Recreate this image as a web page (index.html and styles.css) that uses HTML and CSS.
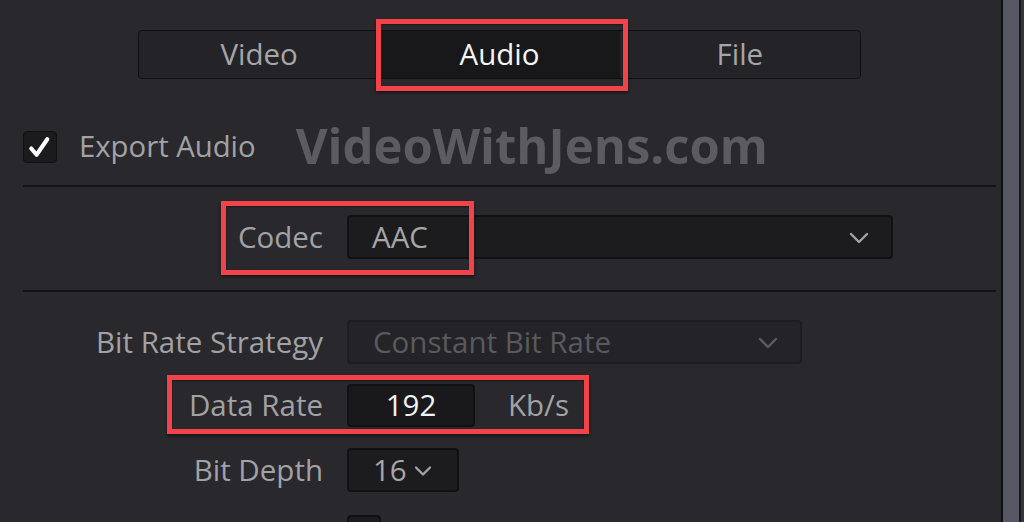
FILE: index.html
```html
<!DOCTYPE html>
<html>
<head>
<meta charset="utf-8">
<link rel="stylesheet" href="styles.css">
</head>
<body>
<div class="app">
  <div class="panel">
    <div class="tabs">
      <div class="tab">Video</div>
      <div class="tab active">Audio<span class="mark mark-audio"></span></div>
      <div class="tab">File</div>
    </div>

    <div class="export-row">
      <div class="checkbox">
        <svg width="34" height="32" viewBox="0 0 34 32"><path d="M8.5 17.5 L14 24 L25 8" fill="none" stroke="#fff" stroke-width="4.2" stroke-linecap="round" stroke-linejoin="round"/></svg>
      </div>
      <span class="export-label">Export Audio</span>
      <span class="watermark">VideoWithJens.com</span>
    </div>

    <div class="divider div-1"></div>

    <div class="row row-codec">
      <div class="label">Codec</div>
      <div class="select select-codec">
        <span>AAC</span>
        <svg class="chev" width="20" height="12" viewBox="0 0 20 12"><path d="M2 2 L10 10 L18 2" fill="none" stroke="#a2a2a2" stroke-width="2.4" stroke-linecap="round" stroke-linejoin="round"/></svg>
      </div>
      <span class="mark mark-codec"></span>
    </div>

    <div class="divider div-2"></div>

    <div class="row row-strategy">
      <div class="label">Bit Rate Strategy</div>
      <div class="select select-strategy disabled">
        <span>Constant Bit Rate</span>
        <svg class="chev" width="20" height="12" viewBox="0 0 20 12"><path d="M2 2 L10 10 L18 2" fill="none" stroke="#5e5e62" stroke-width="2.4" stroke-linecap="round" stroke-linejoin="round"/></svg>
      </div>
    </div>

    <div class="row row-rate">
      <div class="label">Data Rate</div>
      <div class="input">192</div>
      <span class="unit">Kb/s</span>
      <span class="mark mark-rate"></span>
    </div>

    <div class="row row-depth">
      <div class="label">Bit Depth</div>
      <div class="select select-depth">
        <span>16</span>
        <svg class="chev-small" width="20" height="12" viewBox="0 0 20 12"><path d="M3 2.5 L10 9.5 L17 2.5" fill="none" stroke="#a2a2a2" stroke-width="2.4" stroke-linecap="round" stroke-linejoin="round"/></svg>
      </div>
    </div>

    <div class="row row-last">
      <div class="label"></div>
      <div class="small-box"></div>
    </div>
  </div>
  <div class="scroll">
    <div class="scroll-edge"></div>
    <div class="scroll-thumb"></div>
    <div class="scroll-edge2"></div>
    <div class="scroll-rest"></div>
  </div>
</div>
</body>
</html>
```

FILE: styles.css
```css
* { box-sizing: border-box; }
html, body {
  margin: 0;
  padding: 0;
  width: 1024px;
  height: 522px;
  overflow: hidden;
  background: #28282d;
  font-family: "Open Sans", "Liberation Sans", sans-serif;
}
.app {
  display: flex;
  width: 1024px;
  height: 522px;
  overflow: hidden;
}
.panel {
  width: 1001px;
  display: flex;
  flex-direction: column;
  padding-left: 23px;
  padding-right: 5px;
  overflow: hidden;
}
.panel > * { flex-shrink: 0; }

/* Tabs */
.tabs {
  margin-top: 30px;
  margin-left: 115px;
  width: 723px;
  height: 49px;
  display: grid;
  grid-template-columns: 1fr 1fr 1fr;
  border: 1px solid #101012;
  border-radius: 4px;
  background: #242428;
}
.tab {
  position: relative;
  display: flex;
  align-items: center;
  justify-content: center;
  font-size: 29.5px;
  color: #a6a6a8;
  padding-bottom: 2px;
}
.tab.active {
  background: #18181a;
  color: #f4f4f4;
}

/* red annotation boxes */
.mark {
  position: absolute;
  border: 5px solid #f2434a;
  box-shadow: 0 2px 3px rgba(0,0,0,0.45), inset 0 1px 2px rgba(0,0,0,0.35);
  pointer-events: none;
}
.mark-audio {
  left: -3px;
  top: -12px;
  width: 252px;
  height: 72px;
}
.mark-codec {
  left: 198px;
  top: -14px;
  width: 253px;
  height: 74px;
}
.mark-rate {
  left: 144px;
  top: -9px;
  width: 422px;
  height: 59px;
}

/* Export row */
.export-row {
  margin-top: 52px;
  height: 32px;
  display: flex;
  align-items: center;
}
.checkbox {
  width: 34px;
  height: 32px;
  border-radius: 4px;
  background: #1b1b1d;
  border: 1px solid #101012;
  display: flex;
  align-items: center;
  justify-content: center;
}
.checkbox svg { display: block; margin-left: -1px; }
.export-label {
  margin-left: 22px;
  font-size: 29.3px;
  color: #a2a2a4;
  padding-bottom: 2px;
}
.watermark {
  margin-left: 40px;
  font-weight: 700;
  font-size: 49px;
  color: #5b5b60;
  padding-bottom: 4px;
}

.divider {
  height: 2px;
  background: #131315;
  width: 973px;
}
.div-1 { margin-top: 22px; }
.div-2 { margin-top: 31px; }

/* Rows */
.row {
  position: relative;
  display: flex;
  align-items: center;
}
.label {
  width: 300px;
  text-align: right;
  font-size: 29.5px;
  color: #a2a2a4;
  margin-right: 24px;
  padding-bottom: 2px;
  white-space: nowrap;
}
.row-codec { margin-top: 28px; height: 44px; }
.row-strategy { margin-top: 28px; height: 44px; }
.row-rate { margin-top: 20px; height: 43px; }
.row-depth { margin-top: 21px; height: 44px; }
.row-last { margin-top: 23px; height: 44px; align-items: flex-start; }

.select {
  height: 100%;
  display: flex;
  align-items: center;
  justify-content: space-between;
  background: #1c1c1e;
  border: 2px solid #111113;
  border-radius: 4px;
  font-size: 29.5px;
  color: #a6a6a8;
}
.select span { padding-bottom: 2px; }
.select-codec {
  width: 546px;
  padding: 0 22px 0 23px;
}
.select-strategy {
  width: 455px;
  padding: 0 22px 0 24px;
}
.select.disabled {
  background: #242428;
  border-color: #1d1d20;
  color: #5a5a5e;
}
.select-depth {
  width: 112px;
  padding: 0 22px 0 24px;
  justify-content: flex-start;
  gap: 6px;
}
.chev { display: block; margin-top: 1px; }
.chev-small { display: block; margin-top: 2px; }

.input {
  width: 128px;
  height: 100%;
  background: #19191b;
  border: 2px solid #111113;
  border-radius: 4px;
  display: flex;
  align-items: center;
  justify-content: center;
  font-size: 29.5px;
  color: #f2f2f2;
  padding-bottom: 2px;
}
.unit {
  margin-left: 33px;
  font-size: 29.5px;
  color: #a2a2a4;
  padding-bottom: 2px;
}
.small-box {
  width: 34px;
  height: 30px;
  background: #1c1c1e;
  border: 2px solid #111113;
  border-radius: 4px;
}

/* scrollbar */
.scroll {
  width: 23px;
  display: flex;
}
.scroll-edge { width: 2px; background: #111113; }
.scroll-thumb { width: 16px; background: #565963; }
.scroll-edge2 { width: 2px; background: #18181b; }
.scroll-rest { width: 3px; background: #35353a; }
```
